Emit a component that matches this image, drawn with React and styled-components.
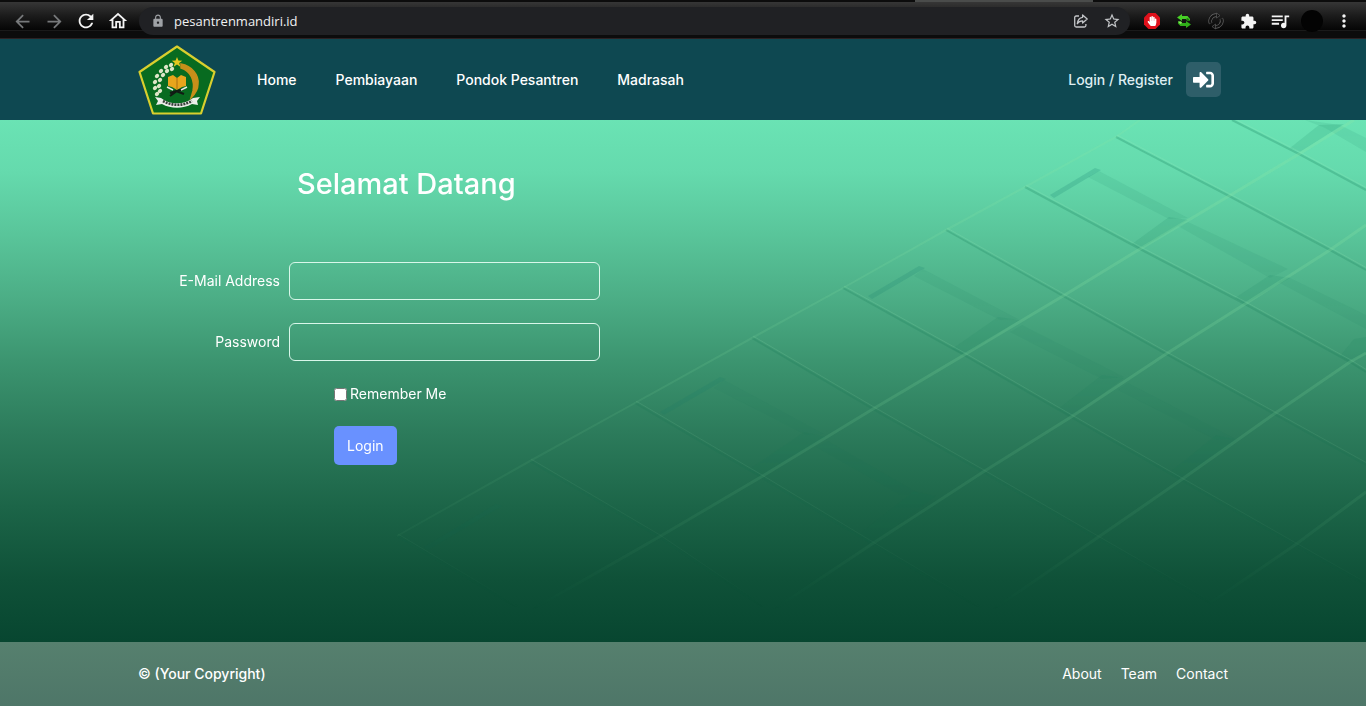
import React from "react";
import styled, { createGlobalStyle } from "styled-components";
import {
  MdArrowBack,
  MdArrowForward,
  MdRefresh,
  MdOutlineHome,
  MdLock,
  MdStarOutline,
  MdExtension,
  MdQueueMusic,
  MdMoreVert,
} from "react-icons/md";
import { FaSignInAlt, FaHandPaper } from "react-icons/fa";

const GlobalStyle = createGlobalStyle`
  *, *::before, *::after { box-sizing: border-box; }
  body {
    margin: 0;
    font-family: Inter, "Open Sans", sans-serif;
    font-size: 14px;
    line-height: 20px;
    color: #fff;
    background: #08452d;
  }
  button, input { font: inherit; color: inherit; }
`;

const Page = styled.div`
  min-height: 100vh;
  display: flex;
  flex-direction: column;
`;

/* ---------- browser toolbar ---------- */

const Toolbar = styled.div`
  height: 39px;
  flex: none;
  display: flex;
  align-items: center;
  padding: 3px 11px 0;
  background:
    linear-gradient(90deg, transparent 67%, #4a4c4b 67%, #4a4c4b 80%, transparent 80%) top / 100% 2px no-repeat,
    linear-gradient(#0c0c0c 0 2px, #363636 2px, #1b1b1b 16px, #050505 30px, #1a1a1a 30px 31px, #0c0c0c 31px 38px, #2c2224 38px);
`;

const ToolButton = styled.button`
  width: 22px;
  height: 22px;
  margin-right: 10px;
  padding: 0;
  border: 0;
  background: none;
  display: flex;
  align-items: center;
  justify-content: center;
  flex: none;
  color: ${(p) => (p.$dim ? "#77797b" : "#f4f4f4")};
`;

const AddressBar = styled.div`
  flex: 1;
  min-width: 0;
  height: 28px;
  margin: 0 11px 0 0;
  padding: 0 7px 0 12px;
  display: flex;
  align-items: center;
  gap: 9px;
  border-radius: 14px;
  background: #202124;
  color: #9fa2a6;
`;

const AddressInput = styled.input`
  flex: 1;
  min-width: 0;
  border: 0;
  padding: 0;
  outline: 0;
  background: none;
  font-family: "Open Sans", sans-serif;
  font-size: 13px;
  color: #f1f1f2;
`;

const AddressButton = styled(ToolButton)`
  margin: 0;
  color: #c3c5c8;
`;

const Extensions = styled.div`
  display: flex;
  align-items: center;
  gap: 10px;
  ${ToolButton} { margin: 0; }
`;

const Avatar = styled.span`
  width: 22px;
  height: 22px;
  border-radius: 50%;
  background: #030303;
`;

const ShareIcon = () => (
  <svg width="16" height="16" viewBox="0 0 16 16" fill="none" stroke="currentColor" strokeWidth="1.3" strokeLinejoin="round" aria-hidden="true">
    <path d="M6 3H3.2Q1.7 3 1.7 4.5v8Q1.7 14 3.2 14h8.2q1.5 0 1.5-1.5V11" />
    <path d="M9.6 2l4.6 4-4.6 4V7.8C7 7.8 5.5 8.6 4.3 10.7 4.7 7 6.500 4.700 9.600 4.300z" />
  </svg>
);

const BlockIcon = () => (
  <svg width="18" height="18" viewBox="0 0 18 18" aria-hidden="true">
    <path d="M5.500 1h7L17 5.500v7L12.500 17h-7L1 12.500v-7z" fill="#e0111b" />
    <FaHandPaper x="4" y="4" size={10} color="#fff" />
  </svg>
);

const RecycleIcon = () => (
  <svg width="16" height="16" viewBox="0 0 16 16" aria-hidden="true">
    <path d="M1 4.500L6 1v2h5.500L14 6v1.500H11L9.800 6H6v2z" fill="#47cf26" />
    <path d="M15 11.500L10 15v-2H4.500L2 10.500V8.500h3L6.200 10H10V8z" fill="#2fae18" />
    <path d="M2 8.500h3l1.200 1.500-2 1z" fill="#8bea62" />
    <path d="M14 7.500H11L9.800 6l2-1z" fill="#1c7f0d" />
  </svg>
);

const SyncIcon = () => (
  <svg width="18" height="18" viewBox="0 0 18 18" fill="none" aria-hidden="true">
    <g stroke="#666" strokeWidth="3.600">
      <path d="M3.700 11.500A6 6 0 0 1 10 3.200" />
      <path d="M14.300 6.500A6 6 0 0 1 8 14.800" />
    </g>
    <g stroke="#121212" strokeWidth="2.200">
      <path d="M3.700 11.500A6 6 0 0 1 10 3.200" />
      <path d="M14.300 6.500A6 6 0 0 1 8 14.800" />
    </g>
    <path d="M9.500 1l3.500 2.600-3.500 2.400zM8.500 12l-3.500 2.600L8.500 17z" fill="#121212" stroke="#666" strokeWidth=".6" />
  </svg>
);

/* ---------- site header ---------- */

const Container = styled.div`
  width: 100%;
  max-width: 1090px;
  margin: 0 auto;
  display: flex;
  align-items: center;
`;

const Header = styled.header`
  flex: none;
  background: #0e4851;
`;

const HeaderRow = styled(Container)`
  height: 81px;
  padding-right: 7px;
`;

const Nav = styled.nav`
  display: flex;
  flex: 1;
  gap: 39px;
  margin-left: 41px;
`;

const NavLink = styled.a`
  color: #fff;
  font-weight: 500;
  text-decoration: none;
  white-space: nowrap;
`;

const LoginLink = styled(NavLink)`
  color: #dfeef2;
  margin-right: 13px;
`;

const SignInButton = styled.button`
  width: 35px;
  height: 35px;
  padding: 0;
  border: 0;
  border-radius: 5px;
  display: flex;
  align-items: center;
  justify-content: center;
  color: #fff;
  background: #2e5e69;
`;

const LOGO_GRAINS = [
  [33, 20], [28, 22], [23, 26], [19, 31], [17, 37], [17, 43], [19, 49],
  [34, 24], [29, 26], [25, 30], [22, 35], [21, 41], [22, 46],
];

const Logo = () => (
  <svg width="78" height="70" viewBox="0 0 78 70" role="img" aria-label="Logo">
    <path d="M39 1.500L76.500 27 63 68.500H15L1.500 27z" fill="#086b20" stroke="#d9cf2e" strokeWidth="2.200" strokeLinejoin="round" />
    {LOGO_GRAINS.map(([x, y]) => (
      <ellipse key={x + "-" + y} cx={x} cy={y} rx="2.300" ry="1.900" fill="#dfe6c8" transform={`rotate(-40 ${x} ${y})`} />
    ))}
    <path d="M43 19C54 21 61 30 60 39C60 45 57 49 53 53L55 46C57 36 53 26 43 23z" fill="#c78f1a" stroke="#c78f1a" strokeWidth="1.500" />
    <path d="M39 12l1.400 3.600 3.800.1-3 2.400 1.100 3.700-3.300-2.200-3.300 2.200 1.100-3.700-3-2.400 3.800-.1z" fill="#e5c81f" />
    <path d="M30 32l5-2 4 3 4-3 5 2v9l-4 1-5 3-5-3-4-1z" fill="#e8a51c" />
    <path d="M39 33v11" stroke="#a96f10" />
    <path d="M32 48l6-2 8 3M46 44l-7 2-7 5" stroke="#111b14" strokeWidth="2" fill="none" />
    <path d="M29 42l6 3M49 42l-6 3" stroke="#e7ece5" strokeWidth="1.500" />
    <path d="M17 52l6 1C31 60 47 60 55 53l7-1-3 4 1 4-6-1C45 64 33 64 24 59l-6 1 2-4z" fill="#eceeea" />
    <path d="M25 56C34 61 45 61 54 56" stroke="#39403b" strokeWidth="2.600" strokeDasharray="2 1" fill="none" />
  </svg>
);

/* ---------- hero with the login form ---------- */

const Hero = styled.main`
  position: relative;
  flex: 1;
  background: linear-gradient(
    #6ae3b4 0,
    #65daad 10%,
    #59c59a 22%,
    #4cae86 34%,
    #3c9570 46%,
    #2c7b5b 60%,
    #1c6548 74%,
    #0f5138 88%,
    #074630 100%
  );
`;

const Facade = styled.svg`
  position: absolute;
  inset: 0;
  width: 100%;
  height: 100%;
`;

const RISING = [
  "1140,0 1116,17 1025,67 946,110 843,168 752,218 635,283 530,341 397,416",
  "1354,0 1299,34 1229,76 1140,129 1063,176 964,235 873,289 761,357 659,417 526,493",
  "1366,105 1330,130 1245,184 1166,234 1071,297 983,352 872,424 770,492",
  "1366,233 1350,242 1274,294 1181,360 1097,418 988,493",
  "1366,372 1295,425 1210,483",
];

const FALLING = [
  "1232,0 1299,34 1366,70",
  "1116,17 1229,76 1330,130 1366,150",
  "1025,67 1140,129 1245,184 1350,242 1366,252",
  "946,110 1063,176 1166,234 1274,294 1366,345",
  "843,168 964,235 1071,297 1181,360 1295,425 1366,465",
  "752,218 873,289 983,352 1097,418 1210,483",
  "635,283 761,357 872,424 988,493",
  "530,341 659,417 770,492",
  "397,416 526,493",
];

const BARS = [
  "1050,75 1095,48 1101,50 1054,78",
  "868,176 919,146 925,148 872,179",
  "660,292 720,257 726,259 664,295",
  "424,427 496,384 502,386 428,430",
];

const BANDS = [
  "1099,51 1188,98 1169,99 1088,57",
  "1188,102 1288,149 1270,158 1178,106",
  "1288,157 1366,195 1366,209 1278,162",
  "923,149 1018,199 1000,200 914,156",
  "1022,205 1124,257 1102,259 1010,212",
  "1128,263 1236,319 1216,320 1118,270",
  "724,260 824,314 806,315 714,268",
  "828,321 920,374 900,375 816,327",
  "1305,0 1340,5 1366,18 1366,32 1325,8",
];

const PILLARS = [
  "1169,97 1188,100 1140,129 1132,124",
  "1270,155 1290,158 1245,184 1235,178",
  "1319,5 1344,4 1300,32 1290,28",
  "998,197 1020,200 964,235 952,229",
  "1102,255 1124,258 1071,297 1058,289",
  "1216,315 1238,320 1181,360 1170,352",
  "804,312 826,317 761,357 748,350",
  "914,371 936,376 872,424 858,415",
  "1354,219 1366,217 1366,232 1350,242 1340,236",
];

const FacadeDrawing = () => (
  <Facade viewBox="0 0 1366 522" preserveAspectRatio="none" aria-hidden="true">
    <defs>
      <linearGradient id="fade" x1="0" y1="0" x2="0" y2="1">
        <stop offset="0" stopColor="#fff" />
        <stop offset=".45" stopColor="#fff" stopOpacity=".7" />
        <stop offset=".75" stopColor="#fff" stopOpacity=".28" />
        <stop offset=".94" stopColor="#fff" stopOpacity="0" />
      </linearGradient>
      <mask id="fadeMask" maskUnits="userSpaceOnUse" x="0" y="0" width="1366" height="522">
        <rect width="1366" height="522" fill="url(#fade)" />
      </mask>
    </defs>
    <g mask="url(#fadeMask)" fill="none">
      {BANDS.map((p) => <polygon key={p} points={p} fill="#0b7455" opacity=".09" />)}
      {PILLARS.map((p) => <polygon key={p} points={p} fill="#0b7455" opacity=".13" />)}
      {BARS.map((p) => <polygon key={p} points={p} fill="#0b7468" opacity=".2" />)}
      {FALLING.map((p) => (
        <g key={p}>
          <polyline points={p} stroke="#0a6b4b" strokeWidth="2" opacity=".24" />
          <polyline points={p} stroke="#a6f0bd" strokeWidth="1" opacity=".2" transform="translate(1 -2)" />
        </g>
      ))}
      {RISING.map((p, i) => (
        <polyline key={p} points={p} stroke="#8ee8a8" strokeWidth={i === 0 ? 2 : 3} opacity={i === 0 ? 0.18 : 0.26} />
      ))}
    </g>
  </Facade>
);

const HeroContent = styled(Container)`
  position: relative;
  display: block;
  padding-top: 44px;
`;

const Title = styled.h1`
  margin: 0 0 58px 159px;
  font-size: 29px;
  line-height: 40px;
  font-weight: 500;
`;

const Form = styled.form`
  width: 462px;
  max-width: 100%;
`;

const Field = styled.div`
  display: flex;
  align-items: center;
  margin-bottom: 23px;
`;

const FieldLabel = styled.label`
  width: 142px;
  margin-right: 9px;
  text-align: right;
`;

const TextInput = styled.input`
  flex: 1;
  min-width: 0;
  height: 38px;
  padding: 6px 12px;
  border: 1px solid #d9f7ea;
  border-radius: 6px;
  background: transparent;
`;

const Actions = styled.div`
  display: flex;
  flex-direction: column;
  align-items: flex-start;
  gap: 22px;
  margin-left: 196px;
`;

const Remember = styled.label`
  display: flex;
  align-items: center;
  gap: 3px;
`;

const Checkbox = styled.input`
  width: 13px;
  height: 13px;
  margin: 0;
`;

const LoginButton = styled.button`
  height: 39px;
  padding: 0 13px;
  border: 0;
  border-radius: 5px;
  background: #6991ff;
`;

/* ---------- footer ---------- */

const Footer = styled.footer`
  flex: none;
  background: linear-gradient(#56806e, #4e7668);
`;

const FooterRow = styled(Container)`
  height: 64px;
  justify-content: space-between;
`;

const Copyright = styled.span`
  font-weight: 500;
`;

const FooterLinks = styled.nav`
  display: flex;
  gap: 19px;
`;

const FooterLink = styled.a`
  color: #fff;
  text-decoration: none;
`;

export default function App() {
  return (
    <Page>
      <GlobalStyle />
      <Toolbar>
        <ToolButton $dim aria-label="Back"><MdArrowBack size={21} /></ToolButton>
        <ToolButton $dim aria-label="Forward"><MdArrowForward size={21} /></ToolButton>
        <ToolButton aria-label="Reload"><MdRefresh size={22} /></ToolButton>
        <ToolButton aria-label="Home page"><MdOutlineHome size={22} /></ToolButton>
        <AddressBar>
          <MdLock size={14} />
          <AddressInput aria-label="Address" defaultValue="pesantrenmandiri.id" />
          <AddressButton aria-label="Share"><ShareIcon /></AddressButton>
          <AddressButton aria-label="Bookmark"><MdStarOutline size={18} /></AddressButton>
        </AddressBar>
        <Extensions>
          <ToolButton aria-label="Ad blocker"><BlockIcon /></ToolButton>
          <ToolButton aria-label="Recycle"><RecycleIcon /></ToolButton>
          <ToolButton aria-label="Sync"><SyncIcon /></ToolButton>
          <ToolButton aria-label="Extensions"><MdExtension size={17} /></ToolButton>
          <ToolButton aria-label="Media"><MdQueueMusic size={22} /></ToolButton>
          <Avatar />
          <ToolButton aria-label="Menu"><MdMoreVert size={20} /></ToolButton>
        </Extensions>
      </Toolbar>

      <Header>
        <HeaderRow>
          <Logo />
          <Nav>
            <NavLink href="#home">Home</NavLink>
            <NavLink href="#pembiayaan">Pembiayaan</NavLink>
            <NavLink href="#pondok">Pondok Pesantren</NavLink>
            <NavLink href="#madrasah">Madrasah</NavLink>
          </Nav>
          <LoginLink href="#login">Login / Register</LoginLink>
          <SignInButton aria-label="Sign in"><FaSignInAlt size={21} /></SignInButton>
        </HeaderRow>
      </Header>

      <Hero>
        <FacadeDrawing />
        <HeroContent>
          <Title>Selamat Datang</Title>
          <Form>
            <Field>
              <FieldLabel htmlFor="email">E-Mail Address</FieldLabel>
              <TextInput id="email" type="email" />
            </Field>
            <Field>
              <FieldLabel htmlFor="password">Password</FieldLabel>
              <TextInput id="password" type="password" />
            </Field>
            <Actions>
              <Remember>
                <Checkbox type="checkbox" />
                Remember Me
              </Remember>
              <LoginButton type="button">Login</LoginButton>
            </Actions>
          </Form>
        </HeroContent>
      </Hero>

      <Footer>
        <FooterRow>
          <Copyright>© (Your Copyright)</Copyright>
          <FooterLinks>
            <FooterLink href="#about">About</FooterLink>
            <FooterLink href="#team">Team</FooterLink>
            <FooterLink href="#contact">Contact</FooterLink>
          </FooterLinks>
        </FooterRow>
      </Footer>
    </Page>
  );
}
